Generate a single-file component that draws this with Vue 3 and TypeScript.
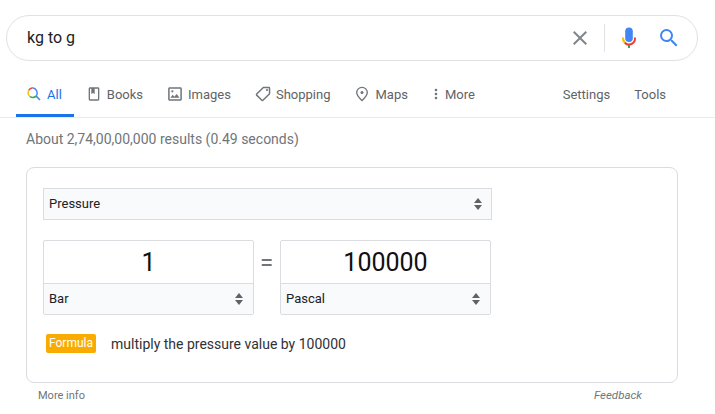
<script setup lang="ts">
const tabs = [
  { label: 'Books', icon: 'books' },
  { label: 'Images', icon: 'images' },
  { label: 'Shopping', icon: 'shopping' },
  { label: 'Maps', icon: 'maps' },
  { label: 'More', icon: 'more' },
]
</script>

<template>
  <div class="page">
    <header class="search">
      <span class="query">kg to g</span>
      <svg class="ic-x" width="24" height="24" viewBox="0 0 24 24"><path fill="#80868b" d="M19 6.41 17.59 5 12 10.59 6.41 5 5 6.41 10.59 12 5 17.59 6.41 19 12 13.41 17.59 19 19 17.59 13.41 12z"/></svg>
      <span class="divider"></span>
      <svg class="ic-mic" width="24" height="24" viewBox="0 0 24 24">
        <rect fill="#4285f4" x="8.200" y="1.500" width="7.600" height="14.500" rx="3.800"/>
        <path fill="#34a853" d="M11 19h2v3h-2z"/>
        <path fill="#fbbc05" d="M7.050 17.400A7 7 0 0 1 5 11.500h2c0 1.700.7 3.200 1.500 4.200z"/>
        <path fill="#ea4335" d="M12 17.500c-1.300 0-2.600-.7-3.500-1.800l-1.450 1.700A7 7 0 0 0 12 19.700a7.300 7.300 0 0 0 7-8.200h-2a5.200 5.200 0 0 1-5 6z"/>
      </svg>
      <svg class="ic-search" width="24" height="24" viewBox="0 0 24 24"><path fill="#4285f4" d="M15.5 14h-.79l-.28-.27A6.471 6.471 0 0 0 16 9.5 6.5 6.5 0 1 0 9.5 16c1.61 0 3.09-.59 4.23-1.57l.27.28v.79l5 4.99L20.49 19l-4.99-5zm-6 0C7.01 14 5 11.99 5 9.5S7.01 5 9.5 5 14 7.01 14 9.5 11.99 14 9.5 14z"/></svg>
    </header>

    <nav class="tabs">
      <a class="tab active">
        <svg width="16" height="16" viewBox="0 0 24 24" fill="none" stroke-width="2.2">
          <path stroke="#4285f4" d="M15.2 15.2 21 21"/>
          <path stroke="#ea4335" d="M4 6.5A8 8 0 0 1 10 2.5"/>
          <path stroke="#fbbc05" d="M4 6.5A8 8 0 0 0 6 15.9"/>
          <path stroke="#34a853" d="M6 15.9A8 8 0 0 0 15.2 15.2"/>
          <path stroke="#4285f4" d="M15.2 15.2A8 8 0 0 0 10 2.5"/>
        </svg>
        <span>All</span>
      </a>
      <a v-for="t in tabs" :key="t.label" class="tab" :class="'tab-' + t.icon">
        <svg v-if="t.icon === 'books'" width="16" height="16" viewBox="0 0 24 24"><path fill="#70757a" d="M18 2H6c-1.1 0-2 .9-2 2v16c0 1.1.9 2 2 2h12c1.1 0 2-.9 2-2V4c0-1.100-.9-2-2-2zm0 18H6V4h2v8l2.500-1.500L13 12V4h5v16z"/></svg>
        <svg v-else-if="t.icon === 'images'" width="16" height="16" viewBox="1.5 1.5 21 21"><path fill="#70757a" d="M19 5v14H5V5h14m0-2H5c-1.100 0-2 .9-2 2v14c0 1.100.9 2 2 2h14c1.100 0 2-.9 2-2V5c0-1.100-.9-2-2-2zm-4.860 8.860-3 3.870L9 13.140 6 17h12l-3.860-5.140zM8.500 10A1.500 1.500 0 1 0 8.500 7a1.500 1.500 0 0 0 0 3z"/></svg>
        <svg v-else-if="t.icon === 'shopping'" width="16" height="16" viewBox="1 1 22 22"><path fill="#70757a" d="M21.410 11.410 12.580 2.580A2 2 0 0 0 11.170 2H4a2 2 0 0 0-2 2v7.170c0 .53.210 1.040.59 1.410l8.830 8.830a2 2 0 0 0 2.830 0l7.170-7.170a2 2 0 0 0 0-2.830h-.01zM12.830 20 4 11.170V4h7.170L20 12.830 12.830 20z" transform="rotate(90 12 12)"/><circle fill="#70757a" cx="17.500" cy="6.500" r="1.500"/></svg>
        <svg v-else-if="t.icon === 'maps'" width="16" height="16" viewBox="1 0 16 16"><path fill="none" stroke="#70757a" stroke-width="1.35" d="M8 14.500C6 12.500 2.700 9.800 2.700 6.600a5.300 5.300 0 0 1 10.600 0C13.300 9.800 10 12.500 8 14.500z"/><circle fill="#70757a" cx="8" cy="6.500" r="1.500"/></svg>
        <svg v-else width="16" height="16" viewBox="0 0 24 24"><path fill="#70757a" d="M12 8a2 2 0 1 0 0-4 2 2 0 0 0 0 4zm0 2a2 2 0 1 0 0 4 2 2 0 0 0 0-4zm0 6a2 2 0 1 0 0 4 2 2 0 0 0 0-4z"/></svg>
        <span>{{ t.label }}</span>
      </a>
      <a class="tab tool settings">Settings</a>
      <a class="tab tool">Tools</a>
    </nav>

    <div class="stats">About 2,74,00,00,000 results (0.49 seconds)</div>

    <section class="card">
      <div class="sel sel-top">
        <span>Pressure</span>
        <span class="arrows"></span>
      </div>
      <div class="convert">
        <div class="unit">
          <div class="value">1</div>
          <div class="sel sel-unit"><span>Bar</span><span class="arrows"></span></div>
        </div>
        <div class="eq">=</div>
        <div class="unit">
          <div class="value">100000</div>
          <div class="sel sel-unit"><span>Pascal</span><span class="arrows"></span></div>
        </div>
      </div>
      <div class="formula">
        <span class="badge">Formula</span>
        <span class="ftext">multiply the pressure value by 100000</span>
      </div>
    </section>

    <footer class="foot">
      <a class="more">More info</a>
      <a class="feedback">Feedback</a>
    </footer>
  </div>
</template>

<style scoped>
.page {
  width: 715px;
  height: 414px;
  overflow: hidden;
  font-family: Roboto, Arial, sans-serif;
  padding-top: 15px;
  box-sizing: border-box;
  background: #fff;
}
.search {
  margin-left: 6px;
  width: 692px;
  height: 46px;
  box-sizing: border-box;
  border: 1px solid #dfe1e5;
  border-radius: 23px;
  display: flex;
  align-items: center;
  padding-left: 20px;
}
.query {
  flex: 1;
  font-size: 16px;
  color: #202124;
  padding-bottom: 2px;
}
.divider {
  width: 1px;
  height: 28px;
  background: #dfe1e5;
  margin: 0 12px 0 12px;
}
.ic-mic { margin-right: 16px; }
.ic-search { margin-right: 16px; }
.tabs {
  margin-top: 11px;
  height: 45px;
  display: flex;
  border-bottom: 1px solid #ebebeb;
  padding-left: 16px;
  box-sizing: content-box;
  width: 699px;
}
.tab {
  display: flex;
  align-items: center;
  gap: 5px;
  font-size: 13px;
  color: #5f6368;
  height: 40px;
  padding-top: 2px;
  margin-right: 24px;
  box-sizing: content-box;
}
.tab svg { flex: none; }
.tab.active {
  color: #1a73e8;
  padding: 2px 12px 0 10px;
  border-bottom: 3px solid #1a73e8;
  margin-right: 12px;
}
.tab-more { gap: 1px; margin-left: -4px; }
.tab.tool { margin-right: 0; }
.settings { margin-left: auto; margin-right: 24px !important; }
.tab.tool:last-child { margin-right: 49px; }
.stats {
  margin: 13px 0 0 26px;
  font-size: 14px;
  line-height: 16px;
  color: #70757a;
}
.card {
  margin: 20px 0 0 26px;
  width: 652px;
  height: 216px;
  box-sizing: border-box;
  border: 1px solid #dadce0;
  border-radius: 8px;
  padding: 20px 16px 0;
}
.sel {
  display: flex;
  align-items: center;
  justify-content: space-between;
  background: #f8fafb;
  box-sizing: border-box;
  font-size: 13px;
  color: #202124;
  padding: 0 9px 2px 5px;
}
.sel-top {
  width: 449px;
  height: 32px;
  border: 1px solid #dadce0;
}
.convert {
  display: flex;
  margin-top: 20px;
  align-items: flex-start;
}
.unit {
  width: 211px;
  height: 75px;
  box-sizing: border-box;
  border: 1px solid #dadce0;
  border-radius: 2px;
  overflow: hidden;
}
.value {
  height: 42px;
  line-height: 43px;
  text-align: center;
  font-size: 25px;
  color: #111;
}
.sel-unit {
  height: 31px;
  border-top: 1px solid #dadce0;
  padding-right: 10px;
}
.eq {
  width: 26px;
  height: 43px;
  line-height: 46px;
  text-align: center;
  font-size: 24px;
  color: #70757a;
  padding-right: 1px;
  box-sizing: border-box;
}
.arrows {
  position: relative;
  width: 8px;
  height: 12px;
  flex: none;
  top: 1px;
}
.arrows::before,
.arrows::after {
  content: '';
  position: absolute;
  left: 0;
  border-left: 4px solid transparent;
  border-right: 4px solid transparent;
}
.arrows::before { top: 0; border-bottom: 5px solid #5f6368; }
.arrows::after { bottom: 0; border-top: 5px solid #5f6368; }
.formula {
  display: flex;
  align-items: center;
  margin: 19px 0 0 3px;
}
.badge {
  width: 50px;
  height: 19px;
  line-height: 18px;
  background: #f9ab00;
  color: #fff;
  border-radius: 2px;
  font-size: 12px;
  text-align: center;
}
.ftext {
  margin-left: 15px;
  font-size: 14px;
  color: #303134;
}
.foot {
  display: flex;
  justify-content: space-between;
  margin: 6px 0 0 38px;
  width: 604px;
  font-size: 11px;
  line-height: 14px;
  color: #70757a;
}
.feedback { font-style: italic; font-size: 11.5px; margin-top: -1px; }
</style>
